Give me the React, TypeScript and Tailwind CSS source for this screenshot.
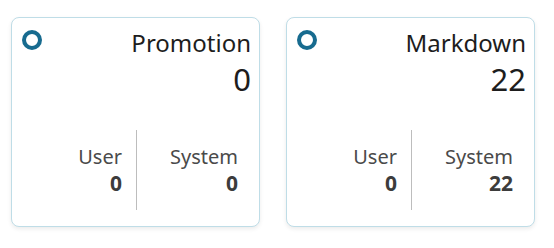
import React from "react";

type CardProps = { title: string; total: string; user: string; system: string };

function Card({ title, total, user, system }: CardProps) {
  return (
    <div className="flex h-[210px] w-[249px] flex-col rounded-[8px] border border-[#bfdde7] bg-white pb-[16px] pl-[10px] pr-[8px] pt-[11px] shadow-[0_2px_4px_rgba(0,0,0,0.08)]">
      <div className="flex items-start justify-between">
        <div className="mt-[1px] h-[20px] w-[20px] rounded-full border-[4px] border-[#176b8f]" />
        <div className="flex flex-col items-end">
          <div className="text-[24px] leading-[28px] text-[#1d1d1d]">{title}</div>
          <div className="mt-[5px] text-[31px] leading-[34px] text-[#1d1d1d]">{total}</div>
        </div>
      </div>
      <div className="mr-[13px] mt-auto flex h-[80px] justify-end">
        <div className="flex flex-col justify-center pr-[14px] text-right">
          <div className="text-[20px] leading-[27px] text-[#4a4a4a]">User</div>
          <div className="text-[21px] font-bold leading-[27px] text-[#3c3c3c]">{user}</div>
        </div>
        <div className="w-px bg-[#bdbdbd]" />
        <div className="flex w-[101px] flex-col justify-center text-right">
          <div className="text-[20px] leading-[27px] text-[#4a4a4a]">System</div>
          <div className="text-[21px] font-bold leading-[27px] text-[#3c3c3c]">{system}</div>
        </div>
      </div>
    </div>
  );
}

export default function App() {
  return (
    <div
      className="flex h-[248px] w-[554px] gap-[26px] bg-white pl-[11px] pt-[17px]"
      style={{ fontFamily: '"Noto Sans", "Open Sans", sans-serif' }}
    >
      <Card title="Promotion" total="0" user="0" system="0" />
      <Card title="Markdown" total="22" user="0" system="22" />
    </div>
  );
}
